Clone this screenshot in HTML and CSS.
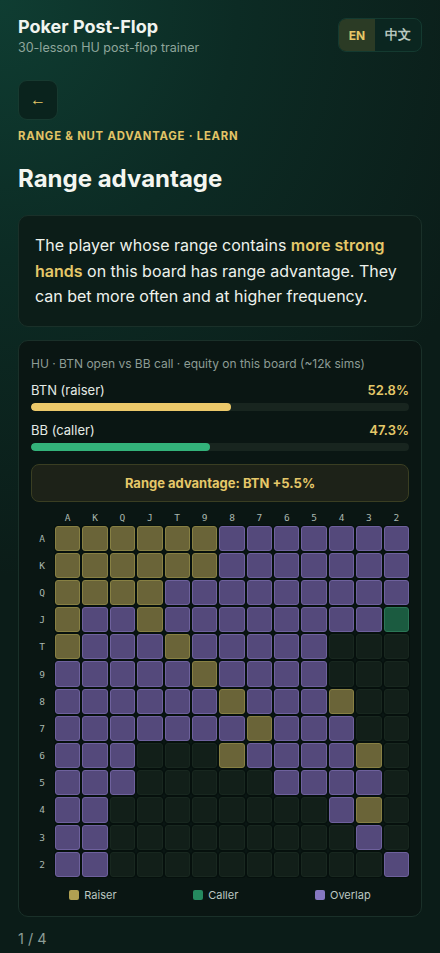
FILE: index.html
```html
<!DOCTYPE html>
<html>
<head>
    <title>Poker Post-Flop</title>
    <link rel="stylesheet" href="styles.css">
</head>
<body>
    <header class="top">
        <div class="brand">
            <div class="brand-title">Poker Post-Flop</div>
            <div class="brand-sub">30-lesson HU post-flop trainer</div>
        </div>
        <div class="lang">
            <span class="lang-btn active">EN</span>
            <span class="lang-btn">中文</span>
        </div>
    </header>

    <button class="back">&larr;</button>

    <div class="eyebrow">RANGE &amp; NUT ADVANTAGE · LEARN</div>
    <h1>Range advantage</h1>

    <div class="card intro">
        The player whose range contains <span class="hl">more strong</span> <span class="hl">hands</span> on this board has range advantage. They can bet more often and at higher frequency.
    </div>

    <div class="card sim">
        <div class="sim-note">HU · BTN open vs BB call · equity on this board (~12k sims)</div>

        <div class="eq-row">
            <span>BTN (raiser)</span>
            <span class="eq-val">52.8%</span>
        </div>
        <div class="bar"><div class="fill raiser" style="width: 52.8%"></div></div>

        <div class="eq-row">
            <span>BB (caller)</span>
            <span class="eq-val">47.3%</span>
        </div>
        <div class="bar"><div class="fill caller" style="width: 47.3%"></div></div>

        <div class="verdict">Range advantage: BTN +5.5%</div>

        <div class="grid" id="grid"></div>

        <div class="legend">
            <span class="legend-item"><i class="sw raiser"></i>Raiser</span>
            <span class="legend-item"><i class="sw caller"></i>Caller</span>
            <span class="legend-item"><i class="sw overlap"></i>Overlap</span>
        </div>
    </div>

    <div class="pager">1 / 4</div>

    <script>
        const ranks = ["A", "K", "Q", "J", "T", "9", "8", "7", "6", "5", "4", "3", "2"];
        // R = raiser only, C = caller only, P = both ranges, . = neither
        const rows = [
            "RRRRRRPPPPPPP",
            "RRRRRRPPPPPPP",
            "RRRRPPPPPPPPP",
            "RPPRPPPPPPPPC",
            "RPPPRPPPPP...",
            "PPPPPRPPPP...",
            "PPPPPPRPPPR..",
            "PPPPPPPRPPP..",
            "PPP...RPPPPR.",
            "PPP.....PPPP.",
            "PP........PR.",
            "PP.........P.",
            "PP..........P"
        ];
        const kinds = { R: "raiser", C: "caller", P: "overlap", ".": "empty" };
        const grid = document.getElementById("grid");

        let html = '<span class="lbl"></span>';
        ranks.forEach(r => html += '<span class="lbl">' + r + '</span>');
        rows.forEach((row, i) => {
            html += '<span class="lbl">' + ranks[i] + '</span>';
            for (const ch of row) {
                html += '<span class="cell ' + kinds[ch] + '"></span>';
            }
        });
        grid.innerHTML = html;
    </script>
</body>
</html>
```

FILE: styles.css
```css
body {
    margin: 0;
    padding: 16px 18px 14px;
    min-height: 953px;
    box-sizing: border-box;
    font-family: Inter, "Noto Sans", sans-serif;
    color: #e9efe9;
    background: radial-gradient(ellipse 120% 60% at 0% 0%, #0f3d32 0%, #0c2b24 45%, #0b1c18 100%);
    background-color: #0b1c18;
}
.top {
    display: flex;
    justify-content: space-between;
    align-items: flex-start;
}
.brand-title {
    font-size: 18px;
    font-weight: 700;
    line-height: 22px;
    color: #f1f4ef;
}
.brand-sub {
    font-size: 12.5px;
    color: #8fa69c;
    margin-top: 2px;
}
.lang {
    display: flex;
    margin-top: 2px;
    height: 32px;
    border-radius: 8px;
    overflow: hidden;
    background: #0b2620;
    border: 1px solid #143a30;
}
.lang-btn {
    display: flex;
    align-items: center;
    justify-content: center;
    font-size: 13px;
    font-weight: 700;
    color: #b7c6be;
    width: 46px;
}
.lang-btn.active {
    width: 36px;
    color: #e6c867;
    background: #2b3b25;
    font-size: 12px;
}
.back {
    display: block;
    margin-top: 25px;
    width: 40px;
    height: 40px;
    border-radius: 9px;
    border: 1px solid #173a30;
    background: #0a231d;
    color: #e6c867;
    font-size: 16px;
    padding: 0;
    cursor: pointer;
}
.eyebrow {
    margin-top: 9px;
    font-size: 11.3px;
    font-weight: 700;
    letter-spacing: 0.8px;
    color: #e2c466;
}
h1 {
    margin: 21px 0 0;
    font-size: 24px;
    font-weight: 700;
    line-height: 30px;
    color: #f4f6f1;
}
.card {
    border-radius: 10px;
    border: 1px solid #1a3029;
    background: #0b1a16;
}
.intro {
    margin-top: 21px;
    padding: 17px 16px 16px 16px;
    font-size: 16px;
    line-height: 25.5px;
    color: #eef2ec;
    background: #0c1d18;
}
.hl {
    color: #e5c869;
    font-weight: 600;
}
.sim {
    margin-top: 13px;
    padding: 15px 12px 14px;
    background: #0a1613;
}
.sim-note {
    font-size: 12px;
    color: #8d9c95;
}
.eq-row {
    display: flex;
    justify-content: space-between;
    margin-top: 11px;
    font-size: 13px;
    color: #e4ebe5;
}
.eq-row + .bar {
    margin-top: 5px;
}
.eq-val {
    color: #e5c869;
    font-weight: 600;
}
.bar {
    height: 8px;
    border-radius: 4px;
    background: #18251f;
    overflow: hidden;
}
.fill {
    height: 100%;
    border-radius: 4px;
}
.fill.raiser {
    background: #ecc96a;
}
.fill.caller {
    background: #33b27a;
}
.verdict {
    margin-top: 13px;
    height: 36px;
    display: flex;
    align-items: center;
    justify-content: center;
    border-radius: 8px;
    border: 1px solid #3a3e22;
    background: #1d2218;
    color: #e5c869;
    font-size: 13px;
    font-weight: 700;
}
.grid {
    margin-top: 10px;
    display: grid;
    grid-template-columns: 22px repeat(13, 1fr);
    grid-template-rows: 12px;
    grid-auto-rows: 25.2px;
    gap: 2px;
}
.lbl {
    display: flex;
    align-items: center;
    justify-content: center;
    font-family: "DejaVu Sans Mono", monospace;
    font-size: 9.5px;
    color: #a9b6ae;
}
.cell {
    border-radius: 3px;
    border: 1px solid transparent;
    box-shadow: 0 0 0 1px #06100d;
}
.cell.raiser {
    background: #6a6438;
    border-color: #878043;
}
.cell.overlap {
    background: #54497b;
    border-color: #6e619d;
}
.cell.caller {
    background: #1b5b40;
    border-color: #2b7656;
}
.cell.empty {
    background: #121f19;
    border-color: #18271f;
}
.legend {
    display: flex;
    justify-content: space-around;
    margin-top: 11px;
    font-size: 11px;
    color: #bcc7c1;
}
.legend-item {
    display: flex;
    align-items: center;
    gap: 5px;
}
.sw {
    width: 10px;
    height: 10px;
    border-radius: 2px;
}
.sw.raiser {
    background: #b0a052;
}
.sw.caller {
    background: #258a5f;
}
.sw.overlap {
    background: #8677c0;
}
.pager {
    margin-top: 13px;
    font-size: 14.5px;
    color: #8d9d96;
}
```
